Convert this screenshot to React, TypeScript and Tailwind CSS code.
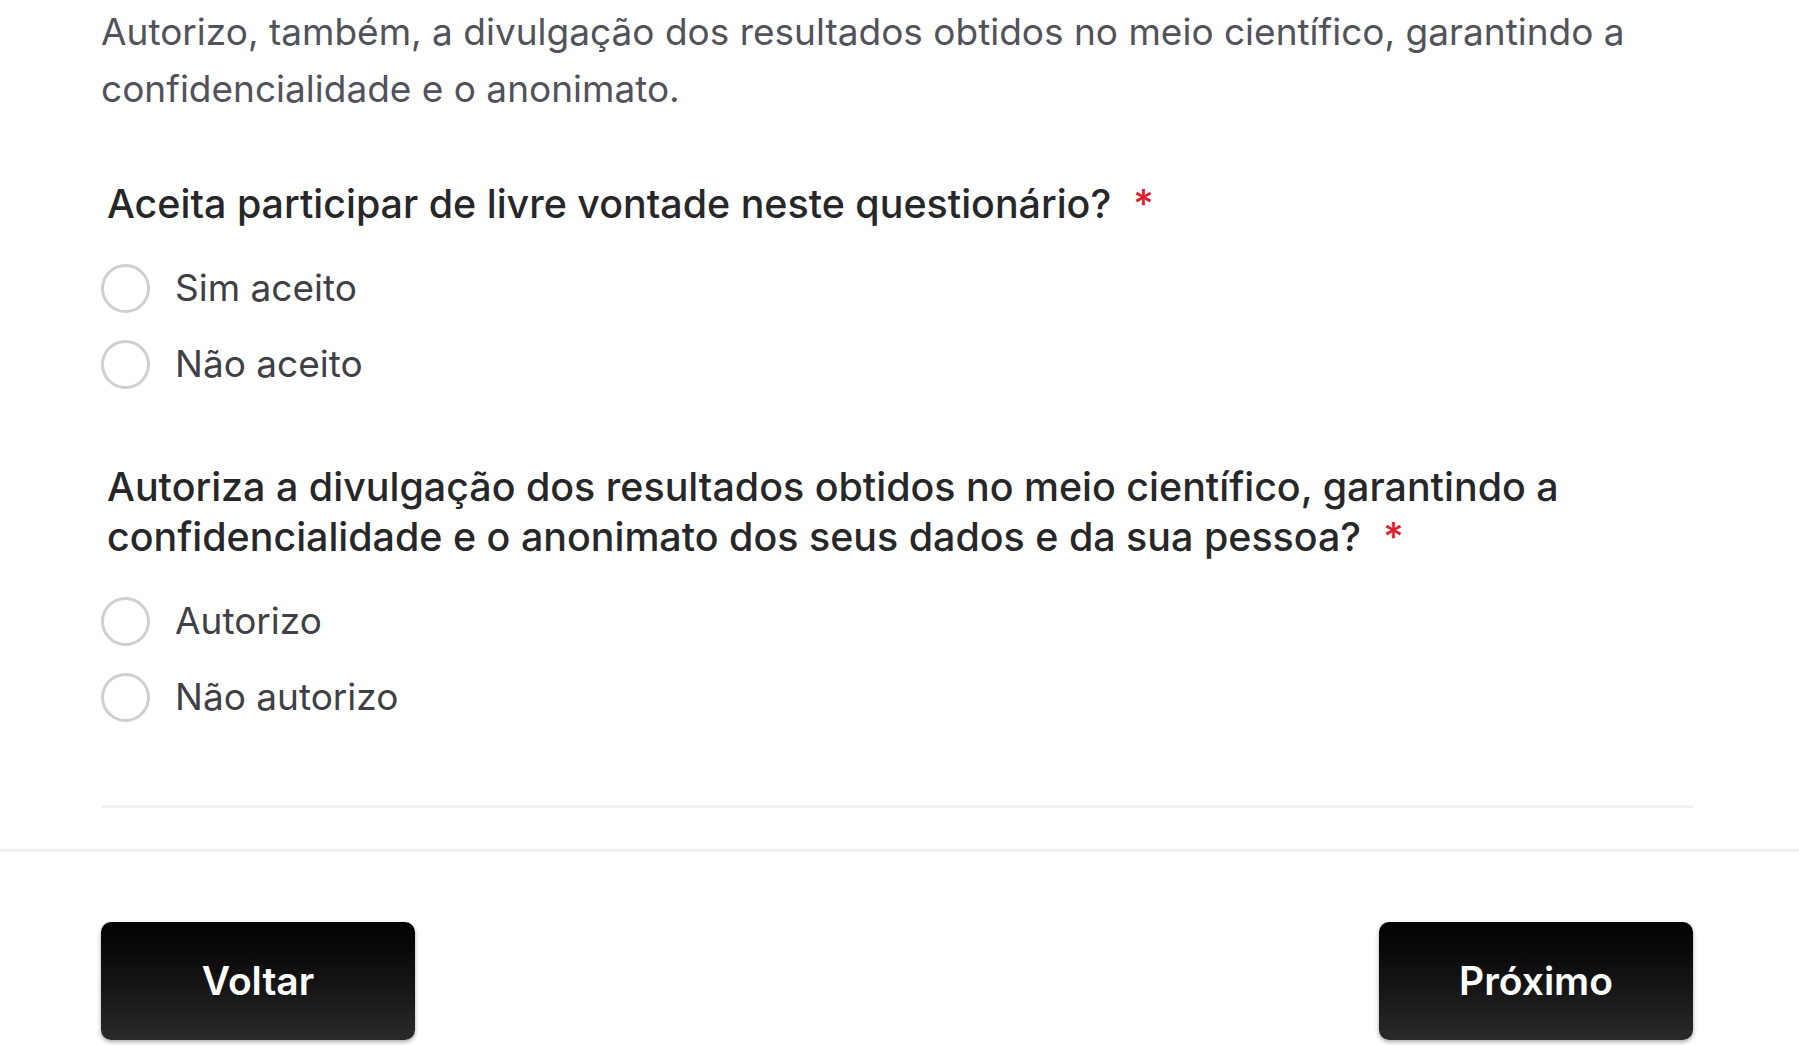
import React from "react";

type Option = { id: string; label: string };

const questions: { id: string; title: string; options: Option[]; gap: string }[] = [
  {
    id: "q1",
    title: "Aceita participar de livre vontade neste questionário?",
    gap: "mt-[62px]",
    options: [
      { id: "sim", label: "Sim aceito" },
      { id: "nao", label: "Não aceito" },
    ],
  },
  {
    id: "q2",
    title:
      "Autoriza a divulgação dos resultados obtidos no meio científico, garantindo a confidencialidade e o anonimato dos seus dados e da sua pessoa?",
    gap: "mt-[60px]",
    options: [
      { id: "autorizo", label: "Autorizo" },
      { id: "nao-autorizo", label: "Não autorizo" },
    ],
  },
];

function RadioOption({ name, option }: { name: string; option: Option }) {
  return (
    <label className="flex h-[76px] cursor-pointer items-center gap-[25px]">
      <input type="radio" name={name} value={option.id} className="peer sr-only" />
      <span className="h-[49px] w-[49px] shrink-0 rounded-full border-[3px] border-[#cfcfd2] bg-white" />
      <span className="text-[37px] text-[#3f3f46]">{option.label}</span>
    </label>
  );
}

function Question({ id, title, options, gap }: (typeof questions)[number]) {
  return (
    <fieldset className={gap}>
      <legend className="pl-[6px] text-[39.4px] font-medium leading-[50px] text-[#27272a]">
        {title}
        <span className="ml-[22px] text-[#e11d2e]">*</span>
      </legend>
      <div className="mt-[21px] flex flex-col">
        {options.map((o) => (
          <RadioOption key={o.id} name={id} option={o} />
        ))}
      </div>
    </fieldset>
  );
}

function NavButton({ children }: { children: React.ReactNode }) {
  return (
    <button className="h-[118px] w-[314px] rounded-[10px] bg-gradient-to-b from-[#030303] to-[#2a2a2a] text-[39px] font-semibold text-white shadow-[0_2px_4px_rgba(0,0,0,0.35)]">
      {children}
    </button>
  );
}

export default function App() {
  return (
    <div
      className="min-h-[1045px] w-full overflow-hidden bg-white"
      style={{ fontFamily: "Inter, 'Noto Sans', sans-serif" }}
    >
      <div className="pl-[101px] pr-[106px] pt-[3px]">
        <p className="text-[37px] leading-[57px] text-[#52525b]">
          Autorizo, também, a divulgação dos resultados obtidos no meio científico, garantindo a
          <br />
          confidencialidade e o anonimato.
        </p>

        {questions.map((q) => (
          <Question key={q.id} {...q} />
        ))}

        <div className="mt-[70px] h-[3px] bg-[#f1f1f4]" />
      </div>

      <div className="mt-[41px] h-[3px] bg-[#eeeef3]" />

      <div className="flex justify-between pl-[101px] pr-[106px] pt-[70px]">
        <NavButton>Voltar</NavButton>
        <NavButton>Próximo</NavButton>
      </div>
    </div>
  );
}
